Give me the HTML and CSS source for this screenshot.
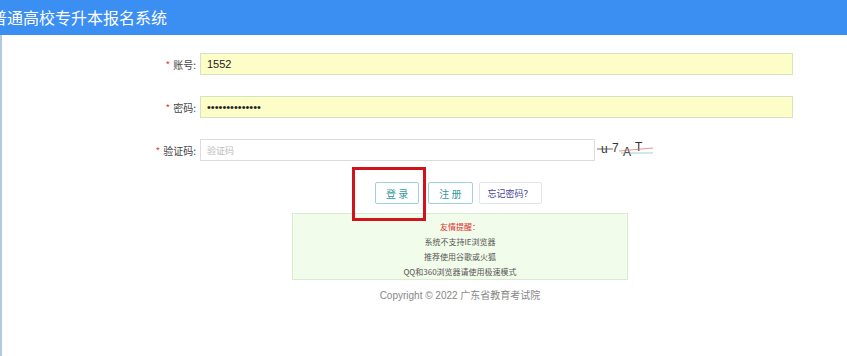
FILE: index.html
```html
<!DOCTYPE html>
<html lang="zh-CN">
<head>
    <meta charset="UTF-8">
    <title>普通高校专升本报名系统</title>
    <link rel="stylesheet" href="styles.css">
</head>
<body>
    <header>
        <h1>普通高校专升本报名系统</h1>
    </header>
    <main>
        <form class="login-form">
            <div class="row">
                <label><span class="star">*</span>账号:</label>
                <input class="field filled" type="text" value="1552">
            </div>
            <div class="row">
                <label><span class="star">*</span>密码:</label>
                <input class="field filled" type="password" value="abcdefghijklmn">
            </div>
            <div class="row">
                <label><span class="star">*</span>验证码:</label>
                <input class="field code" type="text" placeholder="验证码">
                <svg class="captcha" width="60" height="22" viewBox="0 0 60 22">
                    <text x="4" y="14" font-size="12">u</text>
                    <text x="15" y="13" font-size="12">7</text>
                    <text x="26" y="17" font-size="12">A</text>
                    <text x="38" y="12" font-size="12">T</text>
                    <line x1="0" y1="10" x2="16" y2="10" stroke="#444" stroke-width="0.8"/>
                    <line x1="22" y1="12" x2="56" y2="9" stroke="#d66" stroke-width="0.7"/>
                    <line x1="24" y1="14" x2="56" y2="14" stroke="#7bb" stroke-width="0.7"/>
                </svg>
            </div>
            <div class="actions">
                <span class="btn-wrap">
                    <button type="button" class="btn">登 录</button>
                    <span class="mark"></span>
                </span>
                <button type="button" class="btn">注 册</button>
                <button type="button" class="btn forget">忘记密码？</button>
            </div>
            <div class="notice">
                <p class="warn">友情提醒：</p>
                <p>系统不支持IE浏览器</p>
                <p>推荐使用谷歌或火狐</p>
                <p>QQ和360浏览器请使用极速模式</p>
            </div>
            <p class="copyright">Copyright © 2022 广东省教育考试院</p>
        </form>
    </main>
</body>
</html>
```

FILE: styles.css
```css
body {
    margin: 0;
    font-family: "Liberation Sans", "Noto Sans CJK SC", sans-serif;
    background-color: #fff;
    color: #333;
}

header {
    background-color: #3b8ef2;
    height: 35px;
    overflow: hidden;
}

h1 {
    margin: 0;
    font-family: "Noto Sans CJK SC", sans-serif;
    font-size: 16px;
    font-weight: normal;
    line-height: 34px;
    color: #fff;
    text-indent: -9px;
}

main {
    border-left: 2px solid #b4c9e3;
    height: 321px;
}

.login-form {
    margin-left: 98px;
    width: 720px;
    padding-top: 18px;
}

.row {
    display: flex;
    align-items: center;
    height: 22px;
    margin-bottom: 21px;
}

.row label {
    width: 96px;
    margin-right: 4px;
    text-align: right;
    font-family: "Noto Sans CJK SC", sans-serif;
    font-size: 10px;
    color: #444;
}

.star {
    color: #e04040;
    margin-right: 3px;
}

.field {
    box-sizing: border-box;
    height: 22px;
    padding: 0 6px;
    font-family: "Liberation Sans", sans-serif;
    font-size: 11px;
    color: #222;
    outline: none;
}

.filled {
    width: 593px;
    background-color: #fdfdc8;
    border: 1px solid #d5e3c4;
}

.code {
    width: 395px;
    background-color: #fff;
    border: 1px solid #dcdcdc;
    font-family: "Noto Sans CJK SC", sans-serif;
    font-size: 9px;
}

.code::placeholder {
    color: #bbb;
}

.captcha {
    margin-left: 2px;
    font-family: "Liberation Sans", sans-serif;
    fill: #333;
}

.actions {
    display: flex;
    gap: 9px;
    margin-top: 17px;
    padding-left: 275px;
}

.btn-wrap {
    position: relative;
    display: flex;
}

.btn {
    height: 22px;
    padding: 0 10px;
    background-color: #fff;
    border: 1px solid #9fd3d3;
    border-radius: 2px;
    font-family: "Noto Sans CJK SC", sans-serif;
    font-size: 10px;
    color: #3a9a9a;
}

.btn + .btn {
    padding: 0 8px;
}

.forget {
    margin-left: -3px;
    border-color: #e3e3ee;
    color: #44449a;
    font-size: 9px;
    padding: 0 10px;
}

.mark {
    position: absolute;
    left: -23px;
    top: -15px;
    width: 68px;
    height: 48px;
    border: 3px solid #d0141e;
}

.notice {
    width: 336px;
    height: 67px;
    box-sizing: border-box;
    margin: 9px 0 0 192px;
    padding-top: 5px;
    background-color: #f2fcea;
    border: 1px solid #d9ecd0;
    text-align: center;
    font-family: "Noto Sans CJK SC", sans-serif;
    font-size: 8px;
    color: #555;
}

.notice p {
    margin: 0;
    line-height: 15px;
}

.notice .warn {
    color: #e03030;
}

.copyright {
    margin: 8px 0 0 192px;
    width: 336px;
    text-align: center;
    font-size: 10px;
    line-height: 16px;
    color: #888;
}
```
